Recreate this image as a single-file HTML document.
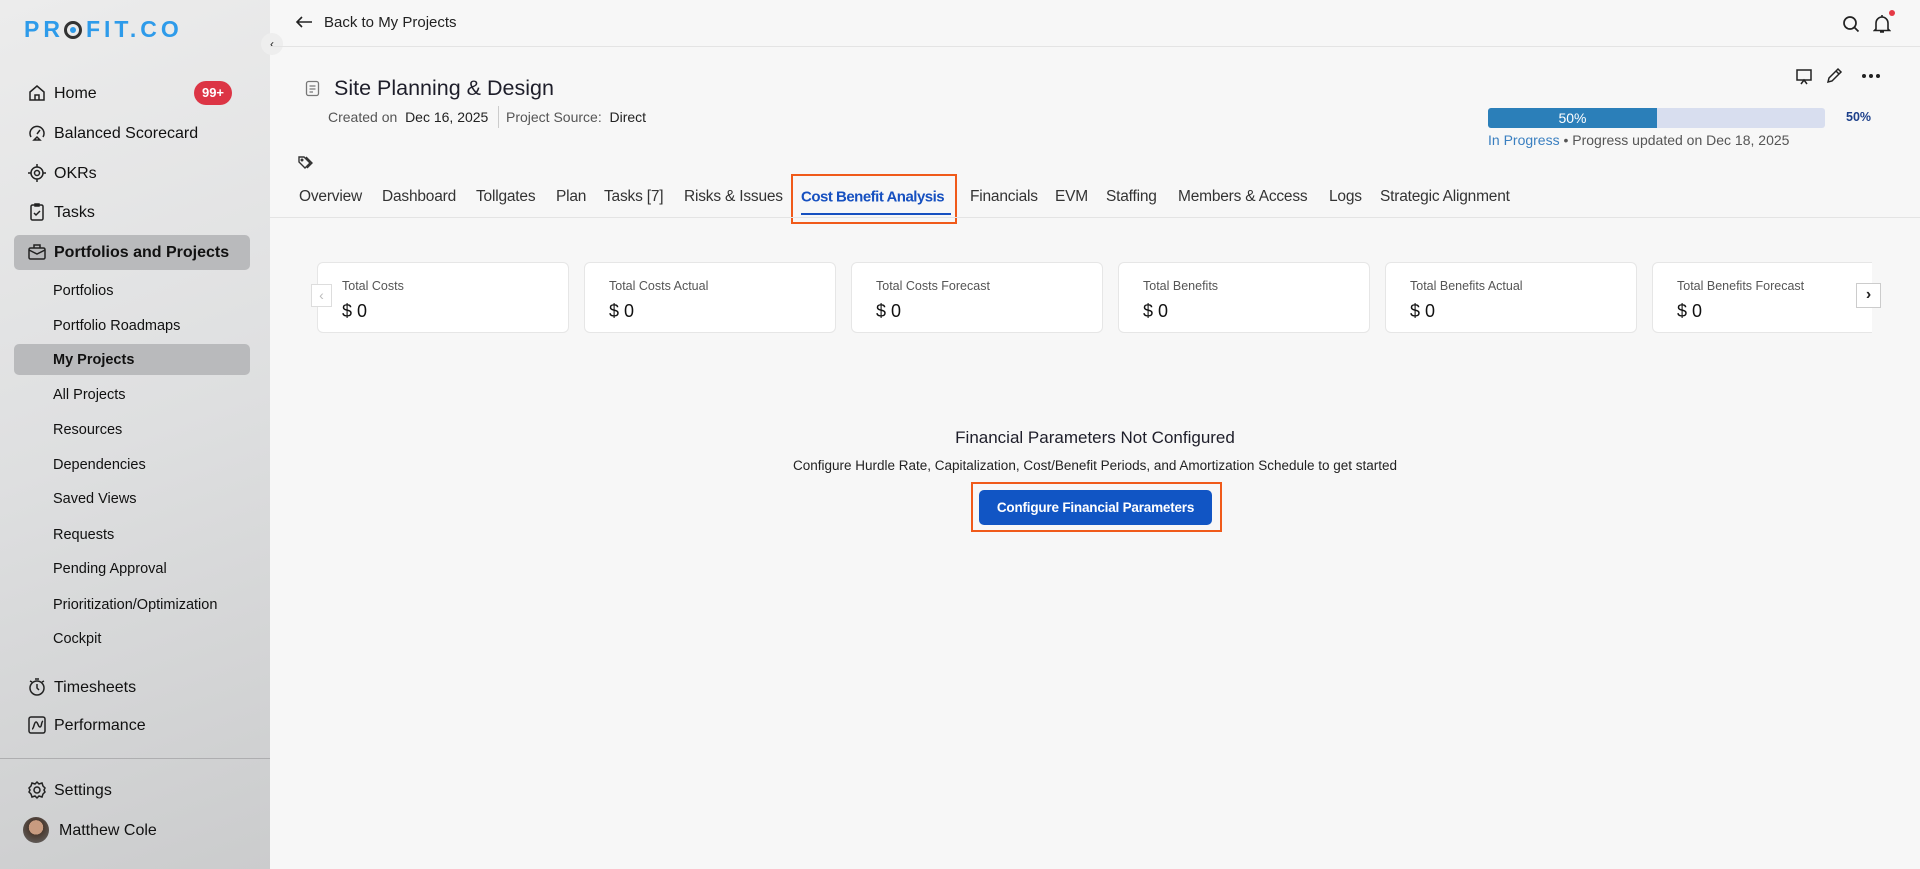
<!DOCTYPE html>
<html><head><meta charset="utf-8"><style>
*{margin:0;padding:0;box-sizing:border-box}
body{width:1920px;height:869px;overflow:hidden;background:#f7f7f7;font-family:"Liberation Sans",sans-serif;color:#1e1e2a;position:relative}
.a{position:absolute;white-space:nowrap}
#side{position:absolute;left:0;top:0;width:270px;height:869px;background:linear-gradient(160deg,#ececec 0%,#dedfe0 50%,#cbcccd 100%)}
.ni{position:absolute;left:54px;font-size:16px;color:#111;transform:translateY(-50%)}
.si{position:absolute;left:53px;font-size:14.5px;color:#111;transform:translateY(-50%)}
.ic{position:absolute;left:27px;width:20px;height:20px;transform:translateY(-50%)}
.tab{position:absolute;top:197px;transform:translateY(-50%);font-size:15.5px;color:#333;letter-spacing:-0.2px}
.card{position:absolute;top:262px;width:252px;height:71px;background:#fff;border:1px solid #e6e6e6;border-radius:6px}
.card .l{position:absolute;left:24px;top:16px;font-size:12.5px;color:#555}
.card .v{position:absolute;left:24px;top:38px;font-size:18px;color:#111}
</style></head><body>
<div id="side">
 <div class="a" style="left:24px;top:16px;font-size:23px;font-weight:bold;color:#2e9bea;letter-spacing:4px">PR<span style="display:inline-block;width:18px;height:18px;border:3px solid #333;border-radius:50%;position:relative;top:2px;margin-right:4px"><span style="position:absolute;left:3px;top:3px;width:6px;height:6px;background:#2e9bea;border-radius:50%"></span></span>FIT.CO</div>
 <div class="a" style="left:261px;top:33px;width:22px;height:22px;border-radius:50%;background:#eee;font-size:12px;text-align:center;line-height:22px;color:#222">‹</div>

 <svg class="ic" style="top:93px" viewBox="0 0 20 20" fill="none" stroke="#222" stroke-width="1.5"><path d="M3 9 L10 3 L17 9 V17 H3 Z M8 17 V12 H12 V17"/></svg>
 <div class="ni" style="top:94px">Home</div>
 <div class="a" style="left:194px;top:81px;width:38px;height:24px;border-radius:12px;background:#dc3545;color:#fff;font-size:13px;font-weight:bold;text-align:center;line-height:24px">99+</div>
 <svg class="ic" style="top:133px" viewBox="0 0 20 20" fill="none" stroke="#222" stroke-width="1.5"><path d="M4 14 A7 7 0 1 1 16 14"/><path d="M10 11 L13 7"/><path d="M7 17 H13 L10 14 Z"/></svg>
 <div class="ni" style="top:134px">Balanced Scorecard</div>
 <svg class="ic" style="top:173px" viewBox="0 0 20 20" fill="none" stroke="#222" stroke-width="1.5"><circle cx="10" cy="10" r="6"/><circle cx="10" cy="10" r="2.5"/><path d="M10 1V4M10 16V19M1 10H4M16 10H19"/></svg>
 <div class="ni" style="top:174px">OKRs</div>
 <svg class="ic" style="top:212px" viewBox="0 0 20 20" fill="none" stroke="#222" stroke-width="1.5"><rect x="4" y="3" width="12" height="15" rx="1.5"/><path d="M8 2H12V4H8Z M7 11 L9 13 L13 9"/></svg>
 <div class="ni" style="top:213px">Tasks</div>
 <div class="a" style="left:14px;top:235px;width:236px;height:35px;background:#b9babc;border-radius:5px"></div>
 <svg class="ic" style="top:252px" viewBox="0 0 20 20" fill="none" stroke="#222" stroke-width="1.5"><rect x="2" y="6" width="16" height="11" rx="1.5"/><path d="M7 6V3H13V6M2 8 L10 12 L18 8"/></svg>
 <div class="ni" style="top:253px;font-weight:bold">Portfolios and Projects</div>
 <div class="si" style="top:291px">Portfolios</div>
 <div class="si" style="top:326px">Portfolio Roadmaps</div>
 <div class="a" style="left:14px;top:344px;width:236px;height:31px;background:#b9babc;border-radius:5px"></div>
 <div class="si" style="top:360px;font-weight:bold">My Projects</div>
 <div class="si" style="top:395px">All Projects</div>
 <div class="si" style="top:430px">Resources</div>
 <div class="si" style="top:465px">Dependencies</div>
 <div class="si" style="top:499px">Saved Views</div>
 <div class="si" style="top:535px">Requests</div>
 <div class="si" style="top:569px">Pending Approval</div>
 <div class="si" style="top:605px">Prioritization/Optimization</div>
 <div class="si" style="top:639px">Cockpit</div>
 <svg class="ic" style="top:687px" viewBox="0 0 20 20" fill="none" stroke="#222" stroke-width="1.5"><circle cx="10" cy="11" r="7"/><path d="M10 7V11L12 13M8 2H12M3 4L5 5M17 4L15 5"/></svg>
 <div class="ni" style="top:688px">Timesheets</div>
 <svg class="ic" style="top:725px" viewBox="0 0 20 20" fill="none" stroke="#222" stroke-width="1.5"><rect x="2" y="2" width="16" height="16" rx="2"/><path d="M5 14 C7 14 7 7 9 7 S11 12 13 12 S14 7 16 6"/></svg>
 <div class="ni" style="top:726px">Performance</div>
 <div class="a" style="left:0;top:758px;width:270px;height:1px;background:#aeaeb0"></div>
 <svg class="ic" style="top:790px" viewBox="0 0 20 20" fill="none" stroke="#222" stroke-width="1.5"><circle cx="10" cy="10" r="3"/><path d="M10 2 L12 4 L15 3 L16 6 L18 8 L17 10 L18 12 L16 14 L15 17 L12 16 L10 18 L8 16 L5 17 L4 14 L2 12 L3 10 L2 8 L4 6 L5 3 L8 4 Z"/></svg>
 <div class="ni" style="top:791px">Settings</div>
 <div class="a" style="left:23px;top:817px;width:26px;height:26px;border-radius:50%;background:radial-gradient(circle at 50% 40%,#c89b80 0 35%,#4a3a30 36%,#6b6b6b 100%)"></div>
 <div class="ni" style="top:831px;left:59px">Matthew Cole</div>
</div>

<!-- header -->
<svg class="a" style="left:295px;top:15px" width="18" height="14" viewBox="0 0 18 14" fill="none" stroke="#222" stroke-width="1.6"><path d="M17 7H2M7 2L2 7L7 12"/></svg>
<div class="a" style="left:324px;top:14px;font-size:15px;color:#222">Back to My Projects</div>
<svg class="a" style="left:1842px;top:15px" width="18" height="18" viewBox="0 0 18 18" fill="none" stroke="#222" stroke-width="1.7"><circle cx="8" cy="8" r="6"/><path d="M12.5 12.5L16.5 16.5"/></svg>
<svg class="a" style="left:1873px;top:14px" width="18" height="20" viewBox="0 0 18 20" fill="none" stroke="#222" stroke-width="1.6"><path d="M3 15V9A6 6 0 0 1 15 9V15L16.5 16.5H1.5Z M7 18H11M9 1V3"/></svg>
<div class="a" style="left:1889px;top:10px;width:6px;height:6px;border-radius:50%;background:#e53945"></div>
<div class="a" style="left:270px;top:46px;width:1650px;height:1px;background:#e4e4e4"></div>

<!-- title -->
<svg class="a" style="left:305px;top:80px" width="15" height="17" viewBox="0 0 15 17" fill="none" stroke="#777" stroke-width="1.3"><rect x="1.5" y="1.5" width="12" height="14" rx="2"/><path d="M4.5 6H10.5M4.5 9H10.5M4.5 12H8"/></svg>
<div class="a" style="left:334px;top:76px;font-size:21.5px;color:#1e1e2a">Site Planning &amp; Design</div>
<div class="a" style="left:328px;top:109px;font-size:14px;color:#555">Created on&nbsp; <span style="color:#222">Dec 16, 2025</span></div>
<div class="a" style="left:498px;top:106px;width:1px;height:22px;background:#ccc"></div>
<div class="a" style="left:506px;top:109px;font-size:14px;color:#555">Project Source:&nbsp; <span style="color:#222">Direct</span></div>
<svg class="a" style="left:297px;top:154px" width="20" height="18" viewBox="0 0 20 18" fill="none" stroke="#333" stroke-width="1.4"><path d="M2 3V8L8 14L13 9L7 3Z M9 3L15 9L10 14"/><circle cx="5" cy="6" r="0.8"/></svg>

<!-- right header tools -->
<svg class="a" style="left:1795px;top:68px" width="18" height="18" viewBox="0 0 18 18" fill="none" stroke="#222" stroke-width="1.5"><rect x="2" y="2" width="14" height="10"/><path d="M6 16L9 12L12 16"/></svg>
<svg class="a" style="left:1825px;top:67px" width="18" height="18" viewBox="0 0 18 18" fill="none" stroke="#222" stroke-width="1.5"><path d="M3 15L4 11L13 2L16 5L7 14Z M11 4L14 7"/></svg>
<div class="a" style="left:1862px;top:74px;width:4px;height:4px;border-radius:50%;background:#222;box-shadow:7px 0 #222,14px 0 #222"></div>
<div class="a" style="left:1488px;top:108px;width:337px;height:20px;background:#d8deef;border-radius:3px;overflow:hidden"><div style="width:169px;height:20px;background:#2b7fb9;color:#fff;font-size:14px;text-align:center;line-height:20px">50%</div></div>
<div class="a" style="left:1846px;top:110px;font-size:12.5px;font-weight:bold;color:#1c3f8a">50%</div>
<div class="a" style="left:1488px;top:132px;font-size:14px;color:#555"><span style="color:#3a7fc0">In Progress</span> • Progress updated on Dec 18, 2025</div>

<!-- tabs -->
<div class="tab" style="left:299px">Overview</div>
<div class="tab" style="left:382px">Dashboard</div>
<div class="tab" style="left:476px">Tollgates</div>
<div class="tab" style="left:556px">Plan</div>
<div class="tab" style="left:604px">Tasks [7]</div>
<div class="tab" style="left:684px">Risks &amp; Issues</div>
<div class="tab" style="left:801px;color:#1650c0;font-weight:bold;font-size:15px;letter-spacing:-0.5px">Cost Benefit Analysis</div>
<div class="a" style="left:801px;top:213px;width:150px;height:2px;background:#1650c0"></div>
<div class="a" style="left:791px;top:174px;width:166px;height:50px;border:2px solid #f05a1a"></div>
<div class="tab" style="left:970px">Financials</div>
<div class="tab" style="left:1055px">EVM</div>
<div class="tab" style="left:1106px">Staffing</div>
<div class="tab" style="left:1178px">Members &amp; Access</div>
<div class="tab" style="left:1329px">Logs</div>
<div class="tab" style="left:1380px">Strategic Alignment</div>
<div class="a" style="left:270px;top:217px;width:1650px;height:1px;background:#e4e4e4"></div>

<!-- cards -->
<div style="position:absolute;left:317px;top:0;width:1555px;height:869px;overflow:hidden">
<div class="card" style="left:0"><div class="l">Total Costs</div><div class="v">$ 0</div></div>
<div class="card" style="left:267px"><div class="l">Total Costs Actual</div><div class="v">$ 0</div></div>
<div class="card" style="left:534px"><div class="l">Total Costs Forecast</div><div class="v">$ 0</div></div>
<div class="card" style="left:801px"><div class="l">Total Benefits</div><div class="v">$ 0</div></div>
<div class="card" style="left:1068px"><div class="l">Total Benefits Actual</div><div class="v">$ 0</div></div>
<div class="card" style="left:1335px"><div class="l">Total Benefits Forecast</div><div class="v">$ 0</div></div>
</div>
<div class="a" style="left:311px;top:284px;width:21px;height:23px;background:#fff;border:1px solid #ddd;color:#bbb;font-size:14px;text-align:center;line-height:21px">‹</div>
<div class="a" style="left:1856px;top:283px;width:25px;height:25px;background:#fff;border:1px solid #ccc;color:#222;font-size:16px;font-weight:bold;text-align:center;line-height:22px">›</div>

<!-- empty state -->
<div class="a" style="left:270px;width:1650px;top:428px;text-align:center;font-size:17px;color:#1e1e2a">Financial Parameters Not Configured</div>
<div class="a" style="left:270px;width:1650px;top:458px;text-align:center;font-size:13.5px;color:#222">Configure Hurdle Rate, Capitalization, Cost/Benefit Periods, and Amortization Schedule to get started</div>
<div class="a" style="left:971px;top:482px;width:251px;height:50px;border:2px solid #f05a1a"></div>
<div class="a" style="left:979px;top:490px;width:233px;height:35px;background:#1155c4;border-radius:5px;color:#fff;font-size:13.5px;font-weight:bold;text-align:center;line-height:35px;letter-spacing:-0.2px">Configure Financial Parameters</div>
</body></html>
